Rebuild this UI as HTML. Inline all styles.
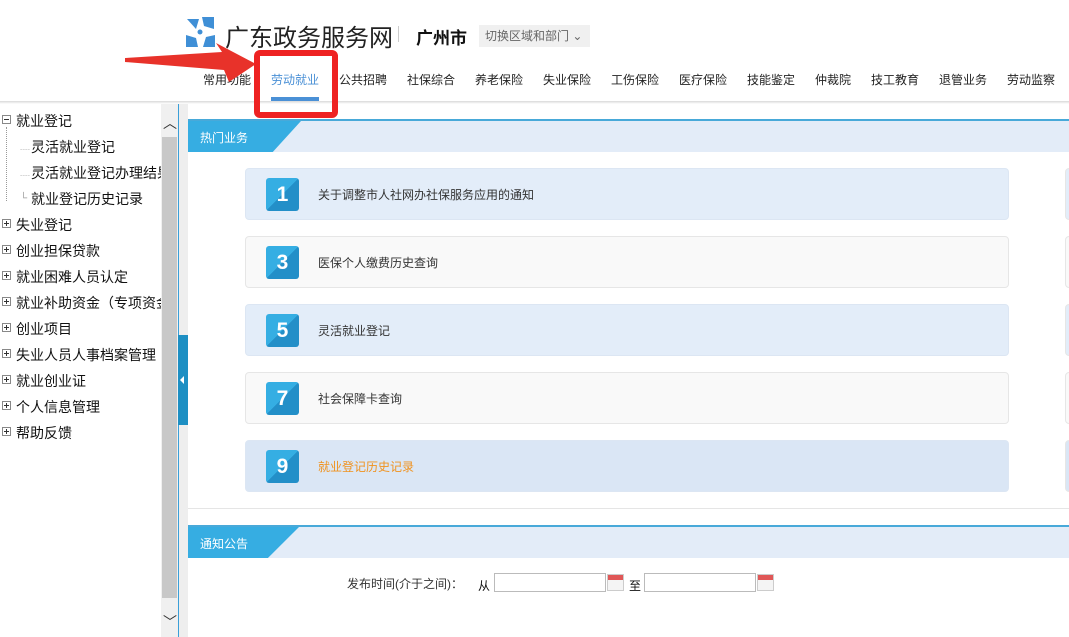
<!DOCTYPE html>
<html><head><meta charset="utf-8"><style>
*{margin:0;padding:0;box-sizing:border-box}
body{width:1069px;height:637px;overflow:hidden;background:#fff;font-family:"Liberation Sans","Noto Sans CJK SC",sans-serif;position:relative;color:#333}
.a{position:absolute}
.nav{font-size:12px;color:#222;top:71px;white-space:nowrap}
.tree{font-size:14px;color:#111;left:16px;white-space:nowrap}
.pm{position:absolute;left:2px;width:9px;height:9px;border:1px solid #888;background:#fff}
.pm:before{content:"";position:absolute;left:1px;top:3px;width:5px;height:1px;background:#333}
.pm.p:after{content:"";position:absolute;left:3px;top:1px;width:1px;height:5px;background:#333}
.card{position:absolute;left:245px;width:764px;height:52px;border-radius:4px;border:1px solid #e6e6e6}
.card.b{background:#e3edf9;border-color:#dce6f3}
.card.w{background:#f9f9f9}
.card2{position:absolute;left:1065px;width:10px;height:52px;border-radius:4px;border:1px solid #e6e6e6}
.num{position:absolute;left:20px;top:9px;width:33px;height:33px;border-radius:3px;background:linear-gradient(135deg,#35aee3 50%,#238fc8 50%);color:#fff;font-weight:bold;font-size:21px;text-align:center;line-height:33px}
.ct{position:absolute;left:72px;top:17px;font-size:12px;color:#333}
.box{position:absolute;height:19px;border:1px solid #bbb;background:#fff}
.cal{position:absolute;width:17px;height:17px;border:1px solid #ccc;background:linear-gradient(#e05757 0 5px,#f4f4f4 5px)}
</style></head><body>
<!-- header -->
<svg class="a" style="left:183px;top:15px" width="34" height="34" viewBox="0 0 34 34">
<g fill="#3f8fd6"><path d="M4 4h12l-3 10z"/><path d="M19 2h12v12l-10-3z"/><path d="M32 20v12H20l3-10z"/><path d="M15 32H3V20l10 3z"/></g>
<circle cx="17" cy="17" r="2.5" fill="#3f8fd6"/></svg>
<div class="a" style="left:225px;top:18px;font-size:24px;color:#222">广东政务服务网</div>
<div class="a" style="left:398px;top:26px;width:1px;height:16px;background:#ccc"></div>
<div class="a" style="left:416px;top:24px;font-size:17px;font-weight:bold;color:#111">广州市</div>
<div class="a" style="left:479px;top:25px;width:111px;height:22px;background:#f0f0f0;font-size:12px;color:#666;line-height:22px;padding-left:6px">切换区域和部门 ⌄</div>
<div class="a nav" style="left:203px">常用功能</div>
<div class="a nav" style="left:271px;color:#4a90d6">劳动就业</div>
<div class="a" style="left:271px;top:97px;width:48px;height:4px;background:#4a90d6"></div>
<div class="a nav" style="left:339px">公共招聘</div>
<div class="a nav" style="left:407px">社保综合</div>
<div class="a nav" style="left:475px">养老保险</div>
<div class="a nav" style="left:543px">失业保险</div>
<div class="a nav" style="left:611px">工伤保险</div>
<div class="a nav" style="left:679px">医疗保险</div>
<div class="a nav" style="left:747px">技能鉴定</div>
<div class="a nav" style="left:815px">仲裁院</div>
<div class="a nav" style="left:871px">技工教育</div>
<div class="a nav" style="left:939px">退管业务</div>
<div class="a nav" style="left:1007px">劳动监察</div>
<div class="a" style="left:0;top:101px;width:1069px;height:3px;background:linear-gradient(#d8d8d8,#fff)"></div>
<!-- sidebar -->
<div class="pm" style="top:115px"></div><div class="a tree" style="top:111px">就业登记</div>
<div class="a" style="left:6px;top:127px;height:74px;border-left:1px dotted #999"></div>
<div class="a tree" style="top:137px;left:20px;color:#999;font-size:10px;top:141px">┈</div><div class="a tree" style="top:137px;left:31px">灵活就业登记</div>
<div class="a tree" style="left:20px;color:#999;font-size:10px;top:167px">┈</div><div class="a tree" style="top:163px;left:31px;width:130px;overflow:hidden">灵活就业登记办理结果</div>
<div class="a tree" style="left:20px;color:#999;font-size:10px;top:193px">└</div><div class="a tree" style="top:189px;left:31px">就业登记历史记录</div>
<div class="pm p" style="top:219px"></div><div class="a tree" style="top:215px">失业登记</div>
<div class="pm p" style="top:245px"></div><div class="a tree" style="top:241px">创业担保贷款</div>
<div class="pm p" style="top:271px"></div><div class="a tree" style="top:267px">就业困难人员认定</div>
<div class="pm p" style="top:297px"></div><div class="a tree" style="top:293px;width:145px;overflow:hidden">就业补助资金（专项资金）</div>
<div class="pm p" style="top:323px"></div><div class="a tree" style="top:319px">创业项目</div>
<div class="pm p" style="top:349px"></div><div class="a tree" style="top:345px">失业人员人事档案管理</div>
<div class="pm p" style="top:375px"></div><div class="a tree" style="top:371px">就业创业证</div>
<div class="pm p" style="top:401px"></div><div class="a tree" style="top:397px">个人信息管理</div>
<div class="pm p" style="top:427px"></div><div class="a tree" style="top:423px">帮助反馈</div>
<div class="a" style="left:161px;top:104px;width:17px;height:533px;background:#f0f0f0"></div>
<div class="a" style="left:162px;top:137px;width:15px;height:461px;background:#c8c8c8"></div>
<div class="a" style="left:163px;top:113px;font-size:14px;color:#333">︿</div>
<div class="a" style="left:163px;top:612px;font-size:14px;color:#333">﹀</div>
<div class="a" style="left:178px;top:104px;width:10px;height:533px;background:#eee;border-left:1px solid #3a9fd8"></div>
<div class="a" style="left:178px;top:335px;width:10px;height:90px;background:#1d8fc3"></div>
<div class="a" style="left:180px;top:376px;border:4px solid transparent;border-right:4px solid #fff;border-left:0"></div>
<!-- panel 1 -->
<div class="a" style="left:188px;top:119px;width:881px;height:2px;background:#48a9d9"></div>
<div class="a" style="left:188px;top:121px;width:881px;height:31px;background:#e3ecf8"></div>
<div class="a" style="left:188px;top:121px;width:113px;height:31px;background:#36ade2;clip-path:polygon(0 0,100% 0,75% 100%,0 100%)"></div>
<div class="a" style="left:200px;top:129px;font-size:12px;color:#fff">热门业务</div>
<div class="a" style="left:188px;top:508px;width:881px;height:1px;background:#e5e5e5"></div>
<div class="card b" style="top:168px"><div class="num">1</div><div class="ct">关于调整市人社网办社保服务应用的通知</div></div>
<div class="card w" style="top:236px"><div class="num">3</div><div class="ct">医保个人缴费历史查询</div></div>
<div class="card b" style="top:304px"><div class="num">5</div><div class="ct">灵活就业登记</div></div>
<div class="card w" style="top:372px"><div class="num">7</div><div class="ct">社会保障卡查询</div></div>
<div class="card b" style="top:440px;background:#dae6f5"><div class="num">9</div><div class="ct" style="color:#f0921e">就业登记历史记录</div></div>
<div class="card2 b" style="top:168px;background:#e3edf9"></div>
<div class="card2" style="top:236px;background:#f9f9f9"></div>
<div class="card2" style="top:304px;background:#e3edf9"></div>
<div class="card2" style="top:372px;background:#f9f9f9"></div>
<div class="card2" style="top:440px;background:#dae6f5"></div>
<!-- panel 2 -->
<div class="a" style="left:188px;top:525px;width:881px;height:2px;background:#48a9d9"></div>
<div class="a" style="left:188px;top:527px;width:881px;height:31px;background:#e3ecf8"></div>
<div class="a" style="left:188px;top:527px;width:111px;height:31px;background:#36ade2;clip-path:polygon(0 0,100% 0,72% 100%,0 100%)"></div>
<div class="a" style="left:200px;top:535px;font-size:12px;color:#fff">通知公告</div>
<div class="a" style="left:347px;top:575px;font-size:12px;color:#333">发布时间(介于之间)：</div>
<div class="a" style="left:478px;top:577px;font-size:12px;color:#111">从</div>
<div class="box" style="left:494px;top:573px;width:112px"></div>
<div class="cal" style="left:607px;top:574px"></div>
<div class="a" style="left:629px;top:577px;font-size:12px;color:#111">至</div>
<div class="box" style="left:644px;top:573px;width:112px"></div>
<div class="cal" style="left:757px;top:574px"></div>
<!-- annotation -->
<svg class="a" style="left:0;top:0" width="300" height="100" viewBox="0 0 300 100"><path d="M125 58 L222 52 L216 43 L256 64 L229 82 L224 70 L125 62 Z" fill="#e8322a"/></svg>
<div class="a" style="left:254px;top:50px;width:84px;height:68px;border:6px solid #ee2222;border-radius:6px"></div>
</body></html>
